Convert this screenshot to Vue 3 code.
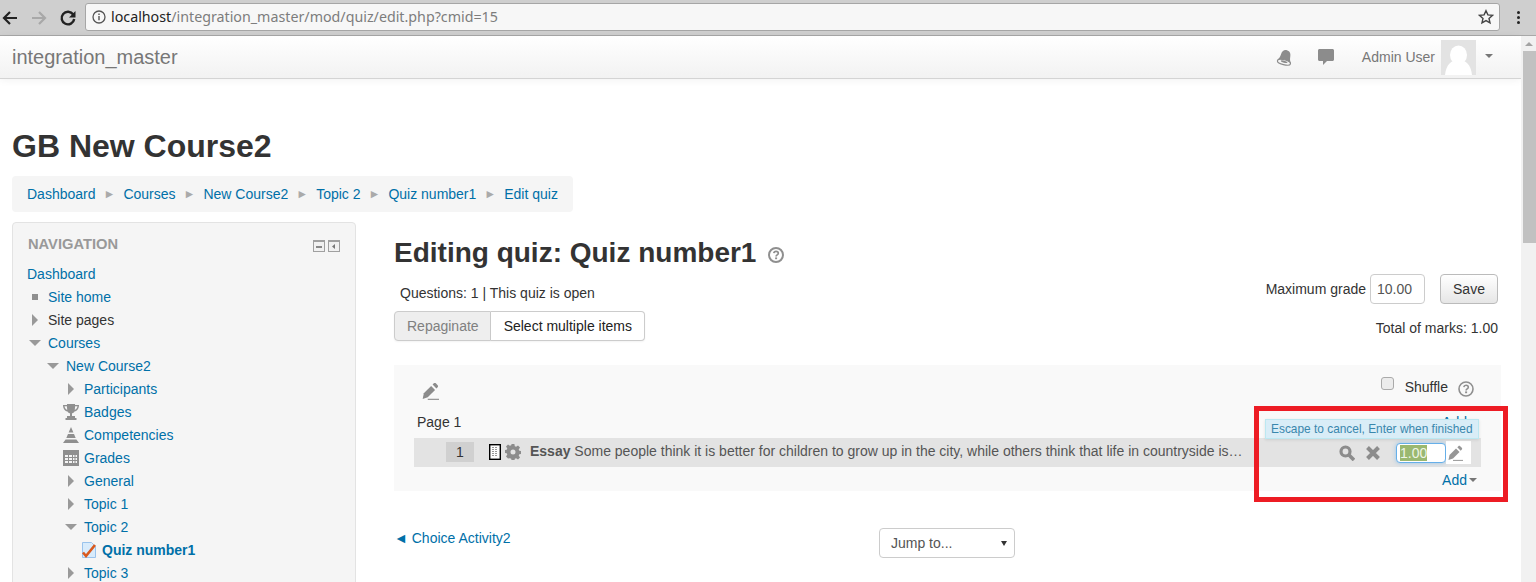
<script setup>
const nav = [
  { label: 'Site home', depth: 0, icon: 'dot', link: true },
  { label: 'Site pages', depth: 0, icon: 'right', link: false },
  { label: 'Courses', depth: 0, icon: 'down', link: true },
  { label: 'New Course2', depth: 1, icon: 'down', link: true },
  { label: 'Participants', depth: 2, icon: 'right', link: true },
  { label: 'Badges', depth: 2, icon: 'trophy', link: true },
  { label: 'Competencies', depth: 2, icon: 'pyramid', link: true },
  { label: 'Grades', depth: 2, icon: 'table', link: true },
  { label: 'General', depth: 2, icon: 'right', link: true },
  { label: 'Topic 1', depth: 2, icon: 'right', link: true },
  { label: 'Topic 2', depth: 2, icon: 'down', link: true },
  { label: 'Quiz number1', depth: 3, icon: 'quiz', link: true, bold: true },
  { label: 'Topic 3', depth: 2, icon: 'right', link: true }
]
const crumbs = ['Dashboard', 'Courses', 'New Course2', 'Topic 2', 'Quiz number1', 'Edit quiz']
</script>

<template>
  <div class="window">
    <header class="chrome">
      <div class="chrome-nav">
        <svg width="18" height="18" viewBox="0 0 18 18" class="ic-back"><path d="M16 9H3M9 3 3 9l6 6" fill="none" stroke="#222" stroke-width="2.200"/></svg>
        <svg width="18" height="18" viewBox="0 0 18 18" class="ic-fwd"><path d="M2 9h13M9 3l6 6-6 6" fill="none" stroke="#a8a8a8" stroke-width="2.200"/></svg>
        <svg width="18" height="18" viewBox="0 0 18 18" class="ic-reload"><path d="M14.200 5.500A6.300 6.300 0 1 0 15.200 10" fill="none" stroke="#222" stroke-width="2.400"/><path d="M16.500 2v6.500H10z" fill="#222"/></svg>
      </div>
      <div class="omnibox">
        <svg width="14" height="14" viewBox="0 0 14 14" class="ic-info"><circle cx="7" cy="7" r="6" fill="none" stroke="#555" stroke-width="1.300"/><path d="M7 6v4.200M7 3.600v1.400" stroke="#555" stroke-width="1.400"/></svg>
        <span class="url"><b>localhost</b>/integration_master/mod/quiz/edit.php?cmid=15</span>
        <svg width="16" height="16" viewBox="0 0 16 16" class="ic-star"><path d="m8 1.700 1.900 4.200 4.500.5-3.400 3 1 4.500L8 11.600l-4 2.300 1-4.500-3.400-3 4.500-.5z" fill="none" stroke="#444" stroke-width="1.400"/></svg>
      </div>
      <div class="kebab"><i></i><i></i><i></i></div>
    </header>

    <div class="viewport">
      <div class="page">
        <nav class="navbar">
          <span class="brand">integration_master</span>
          <div class="nav-right">
            <svg width="18" height="18" viewBox="0 0 18 18" class="ic-bell"><g transform="rotate(14 9 9)"><path d="M9 1c3.200 0 4.600 2.500 4.800 5.500.2 3 1 4.500 2.200 6H2c1.200-1.500 2-3 2.200-6C4.400 3.500 5.800 1 9 1z" fill="#8c8c8c"/><ellipse cx="9" cy="13.300" rx="6.700" ry="2.500" fill="#f4f4f4" stroke="#8c8c8c" stroke-width="1.200"/><ellipse cx="9" cy="12.800" rx="3.500" ry="1" fill="#8c8c8c"/></g></svg>
            <svg width="17" height="16" viewBox="0 0 17 16" class="ic-chat"><path d="M1.500 0h13c.800 0 1.500.700 1.500 1.500v9c0 .800-.700 1.500-1.500 1.500H9l-4 4v-4H1.500C.700 12 0 11.300 0 10.500v-9C0 .700.700 0 1.500 0z" fill="#8c8c8c"/></svg>
            <span class="user">Admin User</span>
            <svg width="35" height="35" viewBox="0 0 35 35" class="avatar"><rect width="35" height="35" fill="#e3e3e3"/><ellipse cx="17.500" cy="15" rx="8.500" ry="9.500" fill="#fff"/><path d="M4 35c1-10 6-15 13.500-15S30 25 31 35z" fill="#fff"/></svg>
            <span class="caret-user"></span>
          </div>
        </nav>

        <h1 class="course">GB New Course2</h1>

        <div class="crumbs">
          <template v-for="(c, i) in crumbs" :key="c">
            <a class="link">{{ c }}</a>
            <span v-if="i < crumbs.length - 1" class="sep">►</span>
          </template>
        </div>

        <div class="columns">
          <aside class="block">
            <div class="block-head">
              <span class="block-title">NAVIGATION</span>
              <div class="block-ctl">
                <svg width="12" height="12" viewBox="0 0 12 12"><rect x=".5" y=".5" width="11" height="11" fill="#f1f1f1" stroke="#a0a0a0"/><path d="M0 1h12" stroke="#a0a0a0" stroke-width="2"/><path d="M3 7h6" stroke="#888" stroke-width="2"/></svg>
                <svg width="12" height="12" viewBox="0 0 12 12"><rect x=".5" y=".5" width="11" height="11" fill="#f1f1f1" stroke="#a0a0a0"/><path d="M0 1h12" stroke="#a0a0a0" stroke-width="2"/><path d="M7 4v5L4 6.500z" fill="#777"/></svg>
              </div>
            </div>
            <a class="link dash">Dashboard</a>
            <ul class="tree">
              <li v-for="n in nav" :key="n.label" class="tree-row" :class="'d' + n.depth">
                <span class="tree-ic">
                  <i v-if="n.icon === 'dot'" class="t-dot"></i>
                  <i v-else-if="n.icon === 'right'" class="t-right"></i>
                  <i v-else-if="n.icon === 'down'" class="t-down"></i>
                  <svg v-else-if="n.icon === 'trophy'" width="16" height="16" viewBox="0 0 16 16"><path d="M4 0h8v1h4c0 3-1.500 6-4.500 6.500-.5 1-1.500 1.500-2.500 2V12h3v2h1.500v2h-11v-2H4v-2h3V9.500C6 9 5 8.500 4.500 7.500 1.500 7 0 4 0 1h4z" fill="#8f8f8f"/><path d="M1.500 2.300h2.400l.3 3.700C2.700 5.400 1.800 4 1.500 2.300zm13 0h-2.400l-.3 3.700c1.500-.6 2.400-2 2.700-3.700z" fill="#f5f5f5"/></svg>
                  <svg v-else-if="n.icon === 'pyramid'" width="16" height="16" viewBox="0 0 16 16"><path d="M8 0l2.400 5.500H5.600zM5 7h6l1.700 4H3.300zM2.600 12.500h10.800L16 16H0z" fill="#8f8f8f"/></svg>
                  <svg v-else-if="n.icon === 'table'" width="16" height="16" viewBox="0 0 16 16"><path d="M0 0h16v16H0z" fill="#8f8f8f"/><path d="M2 5h3v2H2zm4 0h3v2H6zm4 0h1.500v2H10zm2.500 0H14v2h-1.500zM2 8h3v2H2zm4 0h3v2H6zm4 0h1.500v2H10zm2.500 0H14v2h-1.500zM2 11h3v2H2zm4 0h3v2H6zm4 0h1.500v2H10zm2.500 0H14v2h-1.500z" fill="#f5f5f5"/></svg>
                  <svg v-else-if="n.icon === 'quiz'" width="16" height="16" viewBox="0 0 16 16"><path d="M1.500.500h9l4 4v11h-13z" fill="#d8ebfb" stroke="#9ac3ec"/><path d="M2 10.500l3 3.500L14 3" fill="none" stroke="#d9591d" stroke-width="2.600"/></svg>
                </span>
                <a :class="[n.link ? 'link' : 'plain', { strong: n.bold }]">{{ n.label }}</a>
              </li>
            </ul>
          </aside>

          <main class="main">
            <div class="title-row">
              <h2 class="quiz-title">Editing quiz: Quiz number1</h2>
              <svg width="16" height="16" viewBox="0 0 16 16" class="help"><circle cx="8" cy="8" r="7" fill="none" stroke="#8f8f8f" stroke-width="2"/><path d="M5.800 6.200C6 4.800 7 4.300 8 4.300c1.400 0 2.300.8 2.300 1.900 0 1.700-2.200 1.600-2.200 3.200" fill="none" stroke="#8f8f8f" stroke-width="1.700"/><path d="M7.100 10.400h2v1.800h-2z" fill="#8f8f8f"/></svg>
            </div>

            <div class="meta">
              <div class="meta-left">
                <div class="stat">Questions: 1 | This quiz is open</div>
                <div class="btn-group">
                  <span class="btn off">Repaginate</span><span class="btn on">Select multiple items</span>
                </div>
              </div>
              <div class="meta-right">
                <div class="grade">
                  <span>Maximum grade</span>
                  <span class="grade-input">10.00</span>
                  <span class="save">Save</span>
                </div>
                <div class="total">Total of marks: 1.00</div>
              </div>
            </div>

            <section class="quiz">
              <div class="quiz-top">
                <svg width="18" height="18" viewBox="0 0 16 16" class="pencil-big"><path d="M1.500 15 2.500 10 9 3.500 12.500 7 6 13.500z" fill="#8c8c8c"/><path d="M10.300 2.300l1.100-1.100c.5-.5 1.300-.5 1.800 0l1.600 1.600c.5.5.5 1.300 0 1.800l-1.100 1.100z" fill="#8c8c8c"/><path d="M6 15.400h10" stroke="#8c8c8c"/></svg>
                <label class="shuffle">
                  <span class="check"></span>
                  <span class="shuffle-text">Shuffle</span>
                  <svg width="16" height="16" viewBox="0 0 16 16" class="help-s"><circle cx="8" cy="8" r="7" fill="none" stroke="#8f8f8f" stroke-width="1.600"/><path d="M5.800 6.200C6 4.800 7 4.300 8 4.300c1.400 0 2.300.8 2.300 1.900 0 1.700-2.200 1.600-2.200 3.200" fill="none" stroke="#8f8f8f" stroke-width="1.600"/><path d="M7.100 10.400h2v1.800h-2z" fill="#8f8f8f"/></svg>
                </label>
              </div>
              <div class="page-row">
                <span>Page 1</span>
                <a class="link add-hidden">Add</a>
              </div>
              <div class="q-row">
                <span class="q-num">1</span>
                <svg width="12" height="16" viewBox="0 0 12 16" class="q-doc"><rect x=".7" y=".7" width="10.600" height="14.600" fill="#fff" stroke="#000" stroke-width="1.400"/><path d="M3 3.500h6M3 5.500h6M3 7.500h6M3 9.500h6M3 11.500h6" stroke="#999" stroke-dasharray="2 1"/></svg>
                <svg width="16" height="16" viewBox="0 0 16 16" class="q-gear"><path d="M6.600 0h2.800l.4 2.200 1.300.6L13 1.500l2 2-1.300 1.900.6 1.300 2.200.4v2.800l-2.200.4-.6 1.300 1.300 1.900-2 2-1.900-1.300-1.300.6-.4 2.200H6.600l-.4-2.200-1.300-.6L3 14.500l-2-2 1.300-1.900-.6-1.300L-.5 8.900V6.100l2.200-.4.6-1.300L1 2.500l2-2 1.900 1.300 1.300-.6zM8 5.500a2.500 2.500 0 1 0 0 5 2.500 2.500 0 0 0 0-5z" fill="#8c8c8c"/></svg>
                <span class="q-text"><b>Essay</b> Some people think it is better for children to grow up in the city, while others think that life in countryside is…</span>
                <svg width="16" height="16" viewBox="0 0 16 16" class="q-search"><circle cx="6.500" cy="6.500" r="4.500" fill="none" stroke="#8c8c8c" stroke-width="3.200"/><path d="m10 10 5 5" stroke="#8c8c8c" stroke-width="3.600"/></svg>
                <svg width="16" height="16" viewBox="0 0 16 16" class="q-x"><path d="m2.500 2.500 11 11m0-11-11 11" stroke="#8c8c8c" stroke-width="4"/></svg>
                <span class="mark-input"><span class="sel">1.00</span></span>
                <div class="mark">
                  <svg width="16" height="16" viewBox="0 0 16 16" class="pencil-s"><path d="M1.500 15 2.500 10 9 3.500 12.500 7 6 13.500z" fill="#969696"/><path d="M10.300 2.300l1.100-1.100c.5-.5 1.300-.5 1.800 0l1.600 1.600c.5.5.5 1.300 0 1.800l-1.100 1.100z" fill="#969696"/><path d="M6 15.400h10" stroke="#969696"/></svg>
                </div>
                <div class="tip">Escape to cancel, Enter when finished</div>
              </div>
              <div class="add-row"><a class="link">Add</a><i class="caret-add"></i></div>
            </section>

            <div class="foot">
              <a class="link prev">◄ Choice Activity2</a>
              <div class="jump">Jump to...<i class="jump-caret"></i></div>
            </div>
          </main>
        </div>
      </div>

      <div class="scrollbar">
        <i class="sb-up"></i>
        <div class="sb-thumb"></div>
      </div>
      <div class="highlight"></div>
    </div>
  </div>
</template>

<style>
html, body { margin: 0; background: #fff; overflow: hidden; }
</style>

<style scoped>
.window { width: 1536px; height: 582px; overflow: hidden; font-family: "Liberation Sans", Arial, sans-serif; font-size: 14px; line-height: 20px; color: #333; display: flex; flex-direction: column; }
.chrome { height: 35px; flex: none; background: #cfcfcf; border-bottom: 1px solid #a8a8a8; display: flex; align-items: center; box-sizing: content-box; }
.chrome-nav { width: 85px; flex: none; display: flex; align-items: center; padding-left: 1px; box-sizing: border-box; }
.ic-fwd { margin-left: 11px; }
.ic-reload { margin-left: 11px; }
.omnibox { width: 1415px; height: 28px; margin-top: -1px; flex: none; box-sizing: border-box; background: #f7f7f7; border: 1px solid #a6a6a6; border-radius: 3px; display: flex; align-items: center; padding: 0 5px 0 6px; }
.ic-info { flex: none; }
.url { margin-left: 5px; font-family: "Noto Sans", sans-serif; font-size: 14.250px; color: #7d7d7d; flex: 1; white-space: nowrap; }
.url b { font-weight: 400; color: #222; }
.kebab { margin-left: 17px; display: flex; flex-direction: column; gap: 2px; }
.kebab i { display: block; width: 3px; height: 3px; border-radius: 50%; background: #222; }

.viewport { flex: 1; display: flex; position: relative; min-height: 0; }
.page { flex: 1; min-width: 0; }
.navbar { height: 43px; box-sizing: border-box; background: linear-gradient(#fff, #f2f2f2); border-bottom: 1px solid #d4d4d4; box-shadow: 0 1px 8px rgba(0,0,0,.06); display: flex; align-items: center; justify-content: space-between; padding-left: 12px; }
.brand { font-size: 20px; color: #777; }
.nav-right { display: flex; align-items: center; padding-right: 28px; }
.ic-bell { margin-right: 24px; margin-top: 1px; }
.ic-chat { margin-right: 27px; margin-top: -1px; }
.user { color: #777; margin-right: 6px; }
.avatar { display: block; }
.caret-user { width: 0; height: 0; margin: -2px 0 0 9px; border: 4px solid transparent; border-top-color: #777; border-bottom: 0; }
.course { margin: 50px 0 0 12px; font-size: 32px; line-height: 34px; font-weight: 700; color: #333; }
.crumbs { margin: 13px 0 0 12px; width: max-content; height: 36px; padding: 0 15px; box-sizing: border-box; background: #f5f5f5; border-radius: 4px; display: flex; align-items: center; }
.sep { color: #aaa; font-size: 12px; margin: 0 8px; }
.link { color: #0070a8; text-decoration: none; }
.plain { color: #333; }
.strong { font-weight: 700; }
.columns { display: flex; margin-top: 10px; padding-left: 12px; align-items: flex-start; }
.block { width: 344px; flex: none; box-sizing: border-box; background: #f5f5f5; border: 1px solid #e3e3e3; border-radius: 4px; padding: 10px 15px 0 14px; height: 400px; }
.block-head { display: flex; justify-content: space-between; align-items: center; height: 22px; }
.block-title { font-weight: 700; font-size: 14.700px; color: #999; margin-left: 1px; }
.block-ctl { display: flex; gap: 3px; margin-top: 3px; }
.block-ctl svg { display: block; }
.dash { display: block; height: 22px; line-height: 23px; margin-top: 8px; }
.tree { list-style: none; margin: 0; padding: 0; }
.tree-row { display: flex; align-items: center; height: 23px; }
.d0 { padding-left: 0; }
.d1 { padding-left: 18px; }
.d2 { padding-left: 36px; }
.d3 { padding-left: 54px; }
.tree-ic { width: 21px; padding-right: 5px; box-sizing: border-box; flex: none; display: flex; align-items: center; justify-content: center; height: 23px; }
.tree-ic svg { display: block; flex: none; }
.t-dot { width: 6px; height: 6px; background: #8f8f8f; }
.t-right { width: 0; height: 0; border-left: 6px solid #999; border-top: 6px solid transparent; border-bottom: 6px solid transparent; }
.t-down { width: 0; height: 0; border-top: 6px solid #999; border-left: 6px solid transparent; border-right: 6px solid transparent; }
.main { flex: 1; min-width: 0; margin-left: 38px; padding-right: 20px; }
.title-row { display: flex; align-items: center; margin-top: 15px; height: 32px; }
.quiz-title { margin: 0; font-size: 28px; line-height: 32px; color: #333; font-weight: 700; }
.help { margin: 3px 0 0 12px; }
.meta { display: flex; justify-content: space-between; margin-top: 5px; }
.meta-left { padding-top: 9px; }
.stat { padding-left: 6px; }
.btn-group { display: flex; margin-top: 8px; }
.btn { height: 30px; box-sizing: border-box; border: 1px solid #ccc; line-height: 28px; box-shadow: 0 1px 2px rgba(0,0,0,.05); }
.off { background: #eee; color: #808080; border-radius: 4px 0 0 4px; padding: 0 11px 0 12px; }
.on { background: #fff; color: #222; border-left: 0; border-radius: 0 4px 4px 0; padding: 0 12px 0 13px; }
.meta-right { padding-right: 3px; display: flex; flex-direction: column; align-items: flex-end; }
.grade { display: flex; align-items: center; height: 30px; }
.grade-input { width: 55px; height: 30px; box-sizing: border-box; border: 1px solid #ccc; border-radius: 4px; background: #fff; color: #555; line-height: 28px; padding-left: 6px; margin: 0 15px 0 4px; }
.save { width: 58px; height: 30px; box-sizing: border-box; border: 1px solid #bbb; border-radius: 4px; background: linear-gradient(#fff, #e6e6e6); text-align: center; line-height: 28px; color: #333; }
.total { margin-top: 14px; }
.quiz { margin-top: 24px; background: #f9f9f9; height: 126px; padding: 0 20px; box-sizing: border-box; display: flex; flex-direction: column; }
.quiz-top { display: flex; justify-content: space-between; height: 47px; padding: 16px 7px 0 7px; box-sizing: border-box; }
.pencil-big { display: block; margin-top: 1px; }
.shuffle { display: flex; align-items: flex-start; }
.check { width: 13px; height: 13px; margin-top: -4px; border: 1px solid #aaa; border-radius: 3px; background: #ececec; box-sizing: border-box; }
.shuffle-text { margin: -4px 0 0 11px; line-height: 20px; }
.help-s { margin: 0 0 0 10px; }
.page-row { display: flex; justify-content: space-between; height: 26px; line-height: 20px; padding: 0 3px; box-sizing: border-box; flex: none; }
.add-hidden { margin-right: 11px; }
.q-row { height: 29px; background: #e3e3e3; display: flex; align-items: center; position: relative; flex: none; }
.q-row > svg { flex: none; }
.q-num { margin: 0 0 1px 32px; width: 28px; height: 20px; flex: none; line-height: 20px; text-align: center; background: #d0d0d0; color: #333; }
.q-doc { margin: 0 0 1px 15px; }
.q-gear { margin: 0 0 2px 4px; }
.q-text { margin: 0 0 4px 9px; color: #555; white-space: nowrap; }
.q-text b { color: #555; }
.q-search { margin-left: auto; }
.q-x { margin-left: 10px; }
.mark-input { flex: none; margin: 1px 0 0 15px; width: 50px; height: 20px; box-sizing: border-box; border: 1px solid #66afe9; border-radius: 4px; background: #fff; padding-left: 3px; line-height: 18px; box-shadow: 0 0 4px rgba(102,175,233,.6); }
.sel { background: #9ab870; color: #eef4e6; display: inline-block; height: 16px; line-height: 16px; vertical-align: top; margin-top: 1px; }
.mark { display: flex; align-items: center; background: #fff; height: 23px; width: 25px; flex: none; margin-right: 10px; }
.pencil-s { display: block; margin-left: 1px; }
.tip { position: absolute; left: 851px; top: -19px; height: 20px; box-sizing: border-box; padding: 0 5px; background: #d9edf7; border: 1px solid #bce8f1; color: #3a87ad; font-size: 11.900px; line-height: 18px; white-space: nowrap; box-shadow: 0 1px 3px rgba(0,0,0,.1); }
.add-row { display: flex; justify-content: flex-end; align-items: center; height: 24px; flex: none; padding: 2px 4px 0 0; box-sizing: border-box; }
.caret-add { width: 0; height: 0; margin-left: 2px; border: 4px solid transparent; border-top-color: #777; border-bottom: 0; }
.foot { display: flex; align-items: flex-start; margin-top: 37px; }
.prev { width: 485px; flex: none; }
.jump { width: 136px; height: 30px; box-sizing: border-box; border: 1px solid #ccc; border-radius: 4px; background: #fff; color: #555; line-height: 28px; padding-left: 11px; position: relative; }
.jump-caret { position: absolute; right: 7px; top: 12px; width: 0; height: 0; border: 3.500px solid transparent; border-top: 5px solid #333; border-bottom: 0; }
.scrollbar { width: 15px; flex: none; background: #f1f1f1; position: relative; }
.sb-up { position: absolute; left: 4px; top: 6px; width: 0; height: 0; border: 4px solid transparent; border-bottom: 4px solid #a3a3a3; border-top: 0; }
.sb-thumb { position: absolute; left: 2px; right: 0; top: 15px; height: 192px; background: #c1c1c1; }
.highlight { position: absolute; left: 1254px; top: 370px; width: 254px; height: 96px; box-sizing: border-box; border: 5px solid #ed1c24; pointer-events: none; }
</style>
